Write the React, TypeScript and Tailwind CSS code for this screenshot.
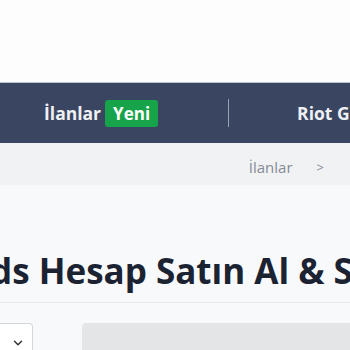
import { ChevronDown } from "lucide-react";

export default function App() {
  return (
    <div className="w-[350px] h-[350px] overflow-hidden bg-[#f8f9fa] font-['Open_Sans',sans-serif]">
      <div className="h-[82px] bg-[#fdfdfd]" />

      <nav className="h-[61px] bg-[#3a4661] border-t border-[#b9c6cf] flex items-center whitespace-nowrap">
        <div className="shrink-0 pl-[44px] flex items-center gap-[4px]">
          <span className="text-[#eef0f4] font-bold text-[17.5px]">İlanlar</span>
          <span className="bg-[#17a34a] text-white font-bold text-[17px] leading-[27px] px-[8px] rounded-[3px]">
            Yeni
          </span>
        </div>
        <div className="shrink-0 ml-[70px] w-px h-[28px] bg-[#9aa3b5]" />
        <span className="shrink-0 ml-[68px] text-[#eef0f4] font-bold text-[17.5px]">Riot Games</span>
      </nav>

      <div className="h-[42px] bg-[#f1f2f4] flex items-start justify-end pt-[15px] pr-[26px] gap-[24px] text-[15px] leading-[18px] text-[#858c96]">
        <span>İlanlar</span>
        <span className="text-[13px]">&gt;</span>
      </div>

      <div className="h-[118px] flex flex-col justify-end border-b border-[#e6e8eb]">
        <h1 className="ml-[-149px] mb-[14px] whitespace-nowrap font-bold text-[35px] leading-none text-[#1b2333]">
          Riot Cards Hesap Satın Al &amp; Satış
        </h1>
      </div>

      <div className="pt-[20px] flex items-start">
        <div className="shrink-0 w-[33px] h-[40px] bg-white border border-l-0 border-[#d4d6da] rounded-r-[4px] flex items-center justify-end pr-[7px]">
          <ChevronDown className="w-[14px] h-[14px] text-[#333]" strokeWidth={2.5} />
        </div>
        <div className="ml-[49px] flex-1 h-[40px] bg-[#e4e5e6] rounded-l-[4px]" />
      </div>
    </div>
  );
}
